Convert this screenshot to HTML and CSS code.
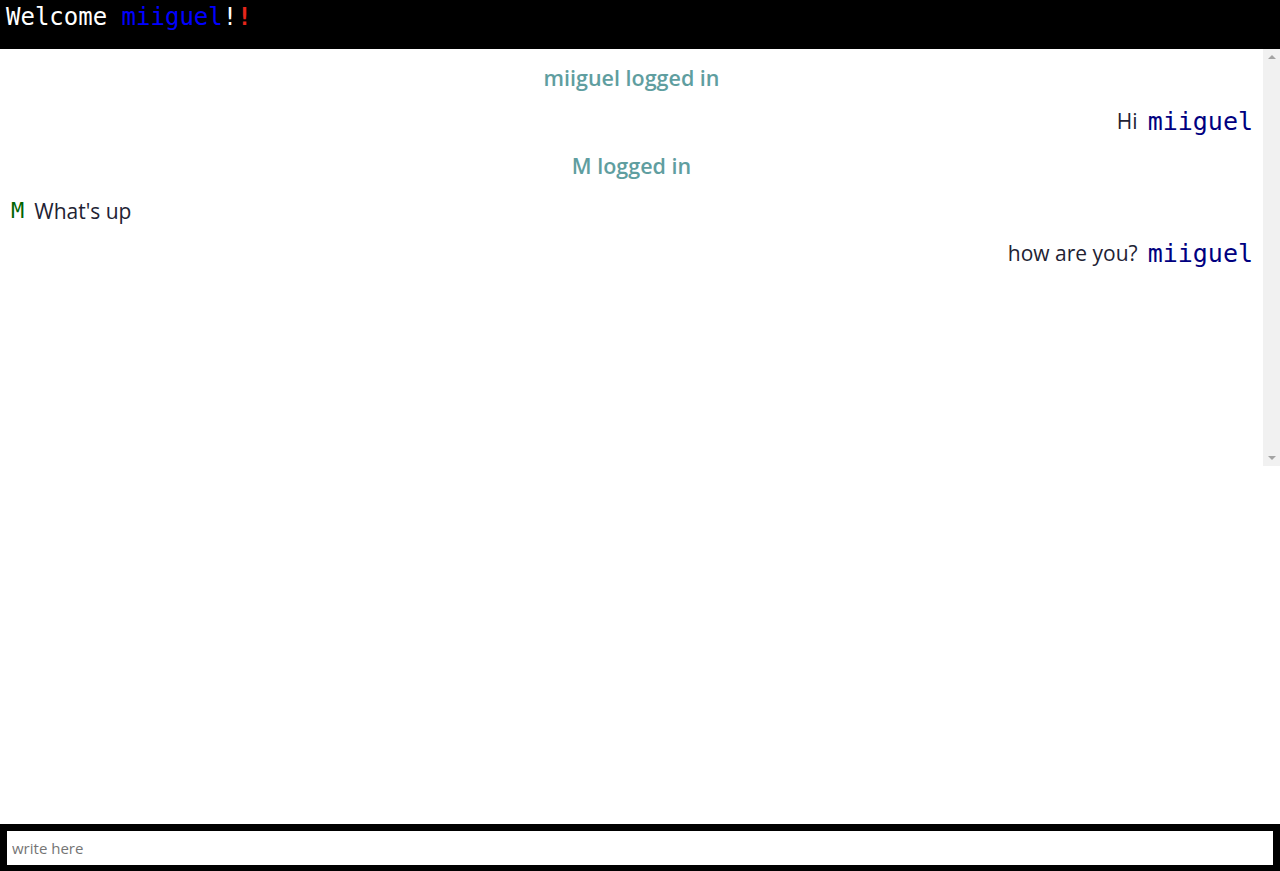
FILE: index.html
```html
<!DOCTYPE html>
<html lang="en">
<head>
<meta charset="utf-8">
<title>Chat</title>
<link rel="stylesheet" href="styles.css">
</head>
<body>
<div class="app">
  <header class="topbar">
    <h1 class="welcome">Welcome <span class="me">miiguel</span>!<span class="bang">!</span></h1>
  </header>
  <div class="chat-wrap">
    <div class="chat">
      <div class="row center"><span class="notice">miiguel logged in</span></div>
      <div class="row right"><span class="text">Hi</span><span class="name mine">miiguel</span></div>
      <div class="row center"><span class="notice">M logged in</span></div>
      <div class="row left"><span class="name other">M</span><span class="text">What's up</span></div>
      <div class="row right"><span class="text">how are you?</span><span class="name mine">miiguel</span></div>
    </div>
    <div class="scrollbar">
      <span class="arrow up"></span>
      <span class="arrow down"></span>
    </div>
  </div>
  <div class="spacer"></div>
  <footer class="composer">
    <input class="input" type="text" placeholder="write here">
  </footer>
</div>
</body>
</html>
```
FILE: styles.css
```css
html, body {
  margin: 0;
  padding: 0;
  height: 100%;
  background: #fff;
}
.app {
  display: flex;
  flex-direction: column;
  height: 871px;
}
.topbar {
  background: #000;
  height: 49px;
  padding: 0 6px;
  box-sizing: border-box;
}
.welcome {
  margin: 0;
  font-family: "DejaVu Sans Mono", "Liberation Mono", monospace;
  font-weight: normal;
  font-size: 24px;
  line-height: 34px;
  color: #fff;
}
.me { color: #0000ff; }
.bang { color: #e8261b; font-weight: bold; }
.chat-wrap {
  display: flex;
  height: 417px;
}
.chat {
  flex: 1;
  padding-top: 6px;
  font-family: "Open Sans", "Noto Sans", sans-serif;
  font-size: 21px;
  color: #222233;
}
.row {
  display: flex;
  align-items: center;
  height: 44px;
  gap: 10px;
  box-sizing: border-box;
}
.row.left { padding-top: 3px; }
.row:last-child { padding-top: 0; }
.row.center { justify-content: center; }
.row.right { justify-content: flex-end; padding-right: 10px; }
.row.left { padding-left: 11px; }
.notice {
  color: #5f9ea0;
  font-weight: 600;
  font-size: 21.5px;
}
.name {
  font-family: "DejaVu Sans Mono", "Liberation Mono", monospace;
  font-size: 25px;
}
.mine { color: #000080; }
.other { color: #006400; font-size: 22px; }
.scrollbar {
  width: 17px;
  background: #f1f1f1;
  display: flex;
  flex-direction: column;
  justify-content: space-between;
  align-items: center;
  padding: 6px 0;
  box-sizing: border-box;
}
.arrow {
  width: 0;
  height: 0;
  border-left: 4px solid transparent;
  border-right: 4px solid transparent;
}
.arrow.up { border-bottom: 4px solid #a3a3a3; }
.arrow.down { border-top: 4px solid #a3a3a3; }
.spacer { flex: 1; }
.composer {
  background: #000;
  height: 47px;
  padding: 7px 7px 6px;
  box-sizing: border-box;
  display: flex;
}
.input {
  flex: 1;
  border: none;
  margin: 0;
  padding: 0 5px;
  height: 34px;
  font-family: "Open Sans", "Noto Sans", sans-serif;
  font-size: 15px;
  color: #222;
  background: #fff;
  outline: none;
}
.input::placeholder { color: #757575; }
```
